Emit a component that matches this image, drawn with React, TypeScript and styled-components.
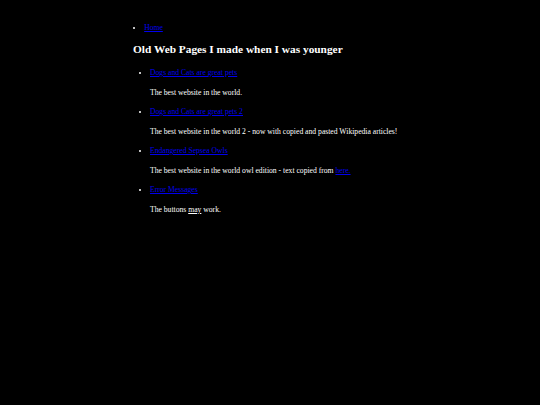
import React from 'react'
import styled, { createGlobalStyle } from 'styled-components'

const GlobalStyle = createGlobalStyle`
  html, body {
    margin: 0;
    padding: 0;
    background: #000;
  }
  body {
    color: #fff;
    font-family: "Liberation Serif", "Times New Roman", serif;
    font-size: 7.65px;
    line-height: 9px;
  }
`

const Page = styled.div`
  width: 274px;
  margin: 0 auto;
  padding: 23px 0;
`

const NavList = styled.ul`
  margin: 0;
  padding: 0;
  list-style: disc inside;
`

const Link = styled.a`
  color: #0000ee;
  text-decoration: underline;
`

const NavLink = styled(Link)`
  margin-left: 0.5px;
`

const Title = styled.h2`
  margin: 10.5px 0 12.5px;
  font-size: 11.35px;
  line-height: 13px;
  font-weight: bold;
`

const ProjectList = styled.ul`
  margin: 0;
  padding-left: 17px;
  list-style: disc;
`

const Project = styled.li`
  & + & {
    margin-top: 10.5px;
  }
`

const Blurb = styled.p`
  margin: 10.5px 0 0;
`

const projects = [
  {
    title: 'Dogs and Cats are great pets',
    blurb: <>The best website in the world.</>,
  },
  {
    title: 'Dogs and Cats are great pets 2',
    blurb: (
      <>
        The best website in the world 2 - now with copied and pasted Wikipedia
        articles!
      </>
    ),
  },
  {
    title: 'Endangered Sepsea Owls',
    blurb: (
      <>
        The best website in the world owl edition - text copied from{' '}
        <Link href="#">here.</Link>
      </>
    ),
  },
  {
    title: 'Error Messages',
    blurb: (
      <>
        The buttons <u>may</u> work.
      </>
    ),
  },
]

const App: React.FC = () => {
  return (
    <>
      <GlobalStyle />
      <Page>
        <NavList>
          <li>
            <NavLink href="#">Home</NavLink>
          </li>
        </NavList>
        <Title>Old Web Pages I made when I was younger</Title>
        <ProjectList>
          {projects.map((project) => (
            <Project key={project.title}>
              <Link href="#">{project.title}</Link>
              <Blurb>{project.blurb}</Blurb>
            </Project>
          ))}
        </ProjectList>
      </Page>
    </>
  )
}

export default App
